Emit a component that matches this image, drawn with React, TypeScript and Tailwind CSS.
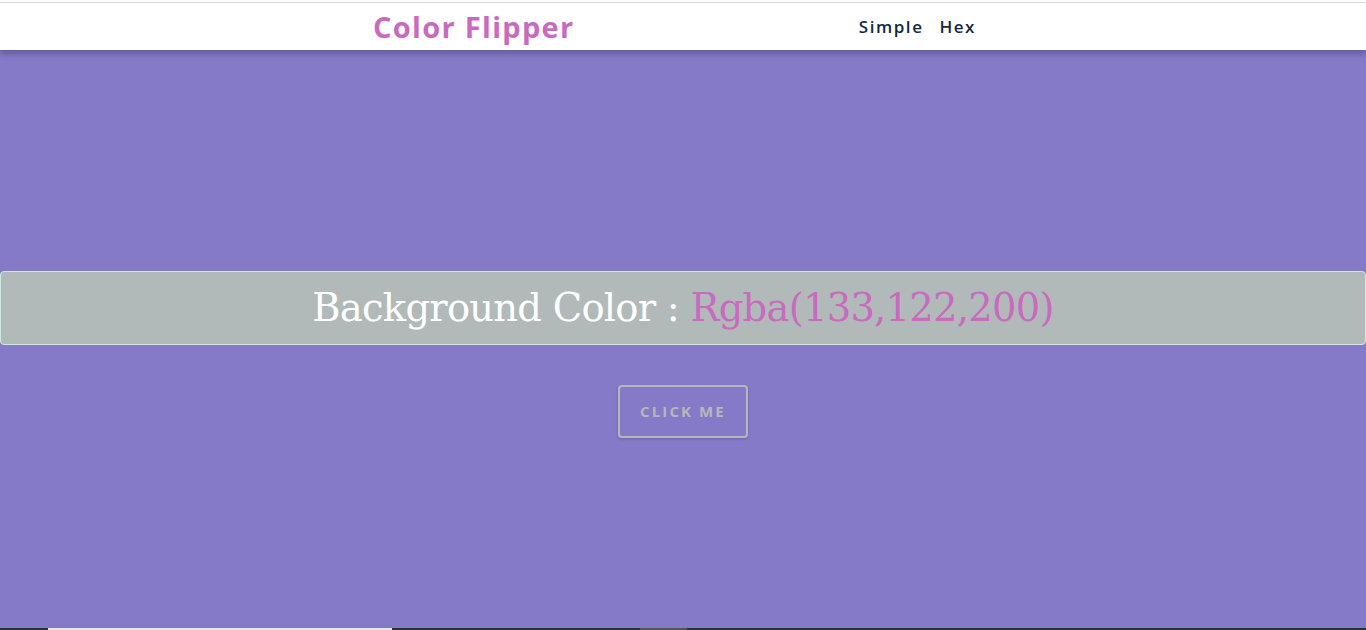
export default function App() {
  return (
    <div className="h-[630px] w-full overflow-hidden flex flex-col bg-[#857ac8]">
      <div className="h-[2px] bg-white" />
      <header className="relative z-10 h-[48px] bg-white border-t border-[#dcdcdc] shadow-[0_4px_6px_rgba(0,0,0,0.25)]">
        <div className="mx-auto w-[620px] h-full flex items-center justify-between pr-[17px]">
          <h1 className="font-['Open_Sans',sans-serif] font-bold text-[29px] tracking-[0.045em] text-[#c86bc0] leading-none">
            Color Flipper
          </h1>
          <nav className="flex gap-[16px] font-['Open_Sans',sans-serif] font-semibold text-[17px] tracking-[0.09em] text-[#102a42]">
            <a>Simple</a>
            <a>Hex</a>
          </nav>
        </div>
      </header>
      <main className="flex-1 flex flex-col items-center pt-[221px]">
        <div className="w-full h-[74px] bg-[#b2b9b9] border border-[#cde9e4] rounded-[4px] flex items-center justify-center">
          <h2 className="font-['DejaVu_Serif',serif] text-[38.5px] text-white tracking-[-0.02em] leading-none">
            Background Color : <span className="text-[#c86bc0]">Rgba(133,122,200)</span>
          </h2>
        </div>
        <button className="mt-[40px] w-[130px] h-[53px] border-2 border-[#b2b9b9] rounded-[4px] shadow-[0_1px_3px_rgba(0,0,0,0.2)] font-['Open_Sans',sans-serif] font-bold text-[15px] tracking-[0.14em] text-[#b2b9b9]">
          CLICK ME
        </button>
      </main>
      <div className="h-[2px] flex bg-[#22333b]">
        <div className="w-[48px]" />
        <div className="w-[344px] bg-[#e8e6e0]" />
        <div className="w-[248px]" />
        <div className="w-[47px] bg-[#4a5a60]" />
      </div>
    </div>
  )
}
